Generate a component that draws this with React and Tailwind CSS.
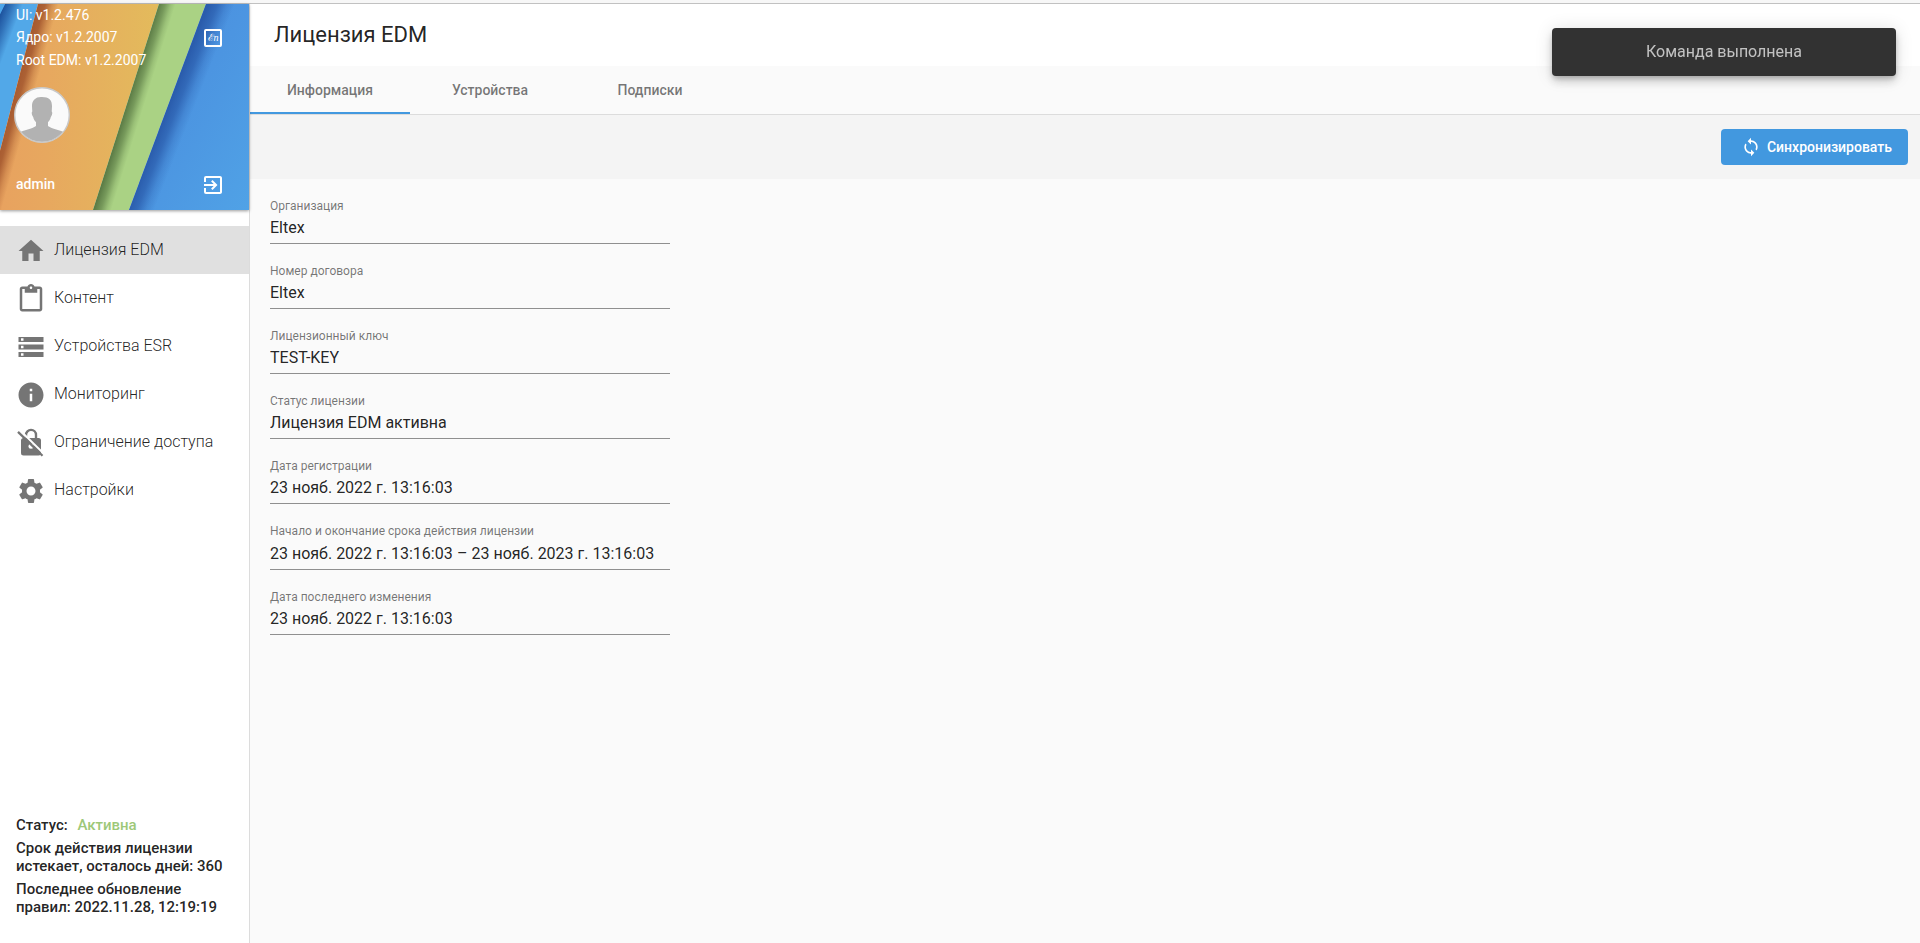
import { useState } from "react";
import {
  MdContentPaste,
  MdExitToApp,
  MdHome,
  MdInfo,
  MdSettings,
  MdStorage,
  MdSync,
} from "react-icons/md";

const LockOffIcon = ({ className }) => (
  <svg className={className} width="1em" height="1em" viewBox="0 0 24 24" fill="currentColor" aria-hidden="true">
    <mask id="lockCut">
      <rect width="24" height="24" fill="#fff" />
      <circle cx="12" cy="14.5" r="2" fill="#000" />
      <path d="M2.500 1.200L23.500 21.800" stroke="#000" strokeWidth="1.600" />
    </mask>
    <g mask="url(#lockCut)">
      <path d="M6 8h12a2 2 0 0 1 2 2v10a2 2 0 0 1-2 2H6a2 2 0 0 1-2-2V10a2 2 0 0 1 2-2Z" />
      <path d="M8 7.500V5.500a4 4 0 0 1 8 0V8.500" fill="none" stroke="currentColor" strokeWidth="1.900" />
    </g>
    <path d="M1.600 3.100L21.200 22.200" stroke="currentColor" strokeWidth="1.800" />
  </svg>
);

const menu = [
  { id: "license", title: "Лицензия EDM", icon: MdHome },
  { id: "content", title: "Контент", icon: MdContentPaste },
  { id: "devices", title: "Устройства ESR", icon: MdStorage },
  { id: "monitoring", title: "Мониторинг", icon: MdInfo },
  { id: "access", title: "Ограничение доступа", icon: LockOffIcon },
  { id: "settings", title: "Настройки", icon: MdSettings },
];

const tabs = ["Информация", "Устройства", "Подписки"];

const fields = [
  { id: "org", label: "Организация", value: "Eltex" },
  { id: "contract", label: "Номер договора", value: "Eltex" },
  { id: "key", label: "Лицензионный ключ", value: "TEST-KEY" },
  { id: "status", label: "Статус лицензии", value: "Лицензия EDM активна" },
  { id: "registered", label: "Дата регистрации", value: "23 нояб. 2022 г. 13:16:03" },
  {
    id: "period",
    label: "Начало и окончание срока действия лицензии",
    value: "23 нояб. 2022 г. 13:16:03",
    end: "23 нояб. 2023 г. 13:16:03",
  },
  { id: "changed", label: "Дата последнего изменения", value: "23 нояб. 2022 г. 13:16:03" },
];

// Diagonal paper stripes behind the user block
const BannerArt = () => (
  <svg
    className="absolute inset-0 h-full w-full"
    viewBox="0 0 249 206"
    preserveAspectRatio="none"
    aria-hidden="true"
  >
    <defs>
      <linearGradient id="orange" x1="0" y1="0" x2="1" y2="0">
        <stop offset="0" stopColor="#e8a25f" />
        <stop offset="0.3" stopColor="#e7a85f" />
        <stop offset="1" stopColor="#e3bb5c" />
      </linearGradient>
      <linearGradient id="blue" x1="0" y1="0" x2="1" y2="1">
        <stop offset="0" stopColor="#4888dc" />
        <stop offset="1" stopColor="#50a2e6" />
      </linearGradient>
      <linearGradient id="brownShade" gradientUnits="userSpaceOnUse" x1="19" y1="73" x2="37" y2="78">
        <stop offset="0" stopColor="#a65a30" />
        <stop offset="0.3" stopColor="#a65a30" stopOpacity="0.9" />
        <stop offset="0.7" stopColor="#a65a30" stopOpacity="0.3" />
        <stop offset="1" stopColor="#a65a30" stopOpacity="0" />
      </linearGradient>
      <linearGradient id="greenShade" gradientUnits="userSpaceOnUse" x1="126" y1="103" x2="142" y2="108">
        <stop offset="0" stopColor="#5b7b45" />
        <stop offset="0.4" stopColor="#5b7b45" stopOpacity="0.65" />
        <stop offset="0.75" stopColor="#5b7b45" stopOpacity="0.2" />
        <stop offset="1" stopColor="#5b7b45" stopOpacity="0" />
      </linearGradient>
      <linearGradient id="blueShade" gradientUnits="userSpaceOnUse" x1="168" y1="103" x2="191" y2="112">
        <stop offset="0" stopColor="#2a5cac" />
        <stop offset="0.35" stopColor="#2a5cac" stopOpacity="0.75" />
        <stop offset="0.7" stopColor="#2a5cac" stopOpacity="0.25" />
        <stop offset="1" stopColor="#2a5cac" stopOpacity="0" />
      </linearGradient>
      <linearGradient id="skyShade" gradientUnits="userSpaceOnUse" x1="3" y1="5" x2="19" y2="11">
        <stop offset="0" stopColor="#1f55a0" />
        <stop offset="0.4" stopColor="#1f55a0" stopOpacity="0.65" />
        <stop offset="1" stopColor="#1f55a0" stopOpacity="0" />
      </linearGradient>
    </defs>
    <path d="M0 0H38L0 147Z" fill="#52a8e8" />
    <path d="M5 0H38L0 147V10Z" fill="url(#skyShade)" />
    <path d="M0 0H5L0 10Z" fill="#4ea6ea" />
    <path d="M38 0H159L93 206H0V147Z" fill="url(#orange)" />
    <path d="M38 0H159L93 206H0V147Z" fill="url(#brownShade)" />
    <path d="M159 0H206L129 206H93Z" fill="#aad284" />
    <path d="M159 0H206L129 206H93Z" fill="url(#greenShade)" />
    <path d="M206 0H249V206H129Z" fill="url(#blue)" />
    <path d="M206 0H249V206H129Z" fill="url(#blueShade)" />
  </svg>
);

const Avatar = () => (
  <svg className="h-14 w-14" viewBox="0 0 56 56" role="img" aria-label="admin">
    <defs>
      <clipPath id="round">
        <circle cx="28" cy="28" r="27" />
      </clipPath>
    </defs>
    <circle cx="28" cy="28" r="27.5" fill="#fafafa" />
    <path
      clipPath="url(#round)"
      fill="#b2b2b2"
      d="M28 10c7 0 10 3 10 9 0 2-.2 4-.3 5.500 1 .5.6 3.500-.9 5.500-.5 2.500-1.500 4-2.800 5v4c4 3 12 4 18 7v12H4V46c6-3 14-4 18-7v-4c-1.300-1-2.300-2.500-2.800-5-1.500-2-1.900-5-.9-5.500-.1-1.500-.3-3.500-.3-5.500 0-6 4-9.500 10-9Z"
    />
    <circle cx="28" cy="28" r="27.3" fill="none" stroke="#c8c8c8" strokeWidth="1.400" />
  </svg>
);

const UserBanner = () => {
  return (
    <div className="relative h-[206px] shrink-0 overflow-hidden text-sm text-white shadow-[0_1px_3px_rgba(0,0,0,0.4)]">
      <BannerArt />
      <div className="relative flex h-full justify-between pl-4 pr-6">
        <div className="flex flex-col">
          <p className="leading-[22px]">UI: v1.2.476</p>
          <p className="leading-[22px]">Ядро: v1.2.2007</p>
          <p className="leading-6">Root EDM: v1.2.2007</p>
          <div className="-ml-0.5 mt-[15px]">
            <Avatar />
          </div>
          <p className="mt-[31px] font-medium leading-5">admin</p>
        </div>
        <div className="flex flex-col items-center justify-between pb-[13px] pt-[25px]">
          <button
            type="button"
            aria-label="English"
            className="flex h-[18px] w-[18px] items-center justify-center rounded-xs border-2 border-white font-['DejaVu_Serif',serif] text-[10px] leading-none"
          >
            ℰ<i className="font-['Liberation_Serif',serif]">n</i>
          </button>
          <button type="button" aria-label="Выйти">
            <MdExitToApp className="text-2xl" />
          </button>
        </div>
      </div>
    </div>
  );
};

const Sidebar = () => {
  const [current, setCurrent] = useState("license");

  return (
    <aside className="flex w-[250px] shrink-0 flex-col border-r border-[#dcdcdc] bg-white">
      <UserBanner />
      <nav className="mt-4 flex-1">
        {menu.map(({ id, title, icon: Icon }) => (
          <a
            key={id}
            href={`#${id}`}
            onClick={() => setCurrent(id)}
            className={`flex h-12 items-center gap-2 px-4 font-light ${
              current === id ? "bg-[#e0e0e0]" : "hover:bg-[#f2f2f2]"
            }`}
          >
            <Icon className="mt-0.5 text-3xl text-[#757575]" />
            {title}
          </a>
        ))}
      </nav>
      <div className="flex flex-col gap-[5px] px-4 pb-[27px] text-[15px] font-medium leading-[18px]">
        <p>
          Статус: <span className="ml-1.5 text-[#9dc878]">Активна</span>
        </p>
        <p>Срок действия лицензии истекает, осталось дней: 360</p>
        <p>Последнее обновление правил: 2022.11.28, 12:19:19</p>
      </div>
    </aside>
  );
};

const Field = ({ id, label, value, end }) => {
  return (
    <div className="flex flex-col border-b border-[#8f8f8f] pb-[3px]">
      <label htmlFor={id} className="text-xs leading-4 text-black/54">
        {label}
      </label>
      {end ? (
        <div className="mt-0.5 flex h-[25px] items-end gap-1">
          <input id={id} readOnly value={value} className="h-6 w-[183px] outline-none" />
          <span className="leading-6">–</span>
          <input
            aria-label="Окончание срока действия лицензии"
            readOnly
            value={end}
            className="h-6 min-w-0 flex-1 outline-none"
          />
        </div>
      ) : (
        <input id={id} readOnly value={value} className="mt-0.5 h-6 w-full outline-none" />
      )}
    </div>
  );
};

const App = () => {
  const [tab, setTab] = useState(tabs[0]);

  return (
    <div className="flex min-h-screen flex-col bg-[#fafafa] font-[Roboto,sans-serif] text-base text-black/87">
      <div className="h-1 border-b border-[#c1c1c1] bg-[#f7f7f7]" />
      <div className="flex flex-1">
        <Sidebar />
        <main className="min-w-0 flex-1">
          <header className="flex h-[62px] items-center bg-white px-6">
            <h1 className="text-[22px] leading-8">Лицензия EDM</h1>
          </header>
          <div className="flex border-b border-[#dcdcdc]" role="tablist">
            {tabs.map((name) => (
              <button
                key={name}
                type="button"
                role="tab"
                aria-selected={tab === name}
                onClick={() => setTab(name)}
                className={`h-12 w-40 border-b-2 pt-0.5 text-sm font-medium text-black/54 ${
                  tab === name ? "border-[#4298df]" : "border-transparent"
                }`}
              >
                {name}
              </button>
            ))}
          </div>
          <div className="flex h-16 items-center justify-end bg-[#f4f4f4] px-3">
            <button
              type="button"
              className="flex h-9 items-center gap-1.5 rounded bg-[#4298df] pl-5 pr-4 text-sm font-medium text-white"
            >
              <MdSync className="text-xl" />
              Синхронизировать
            </button>
          </div>
          <form className="flex w-[440px] flex-col gap-[19px] px-5 pt-[19px]">
            {fields.map((field) => (
              <Field key={field.id} {...field} />
            ))}
          </form>
        </main>
      </div>
      <div
        role="status"
        className="fixed right-6 top-7 flex h-12 w-[344px] items-center justify-center rounded bg-[#323232] text-white/70 shadow-[0_3px_5px_-1px_rgba(0,0,0,0.2),0_6px_10px_rgba(0,0,0,0.14),0_1px_18px_rgba(0,0,0,0.12)]"
      >
        Команда выполнена
      </div>
    </div>
  );
};

export default App;
